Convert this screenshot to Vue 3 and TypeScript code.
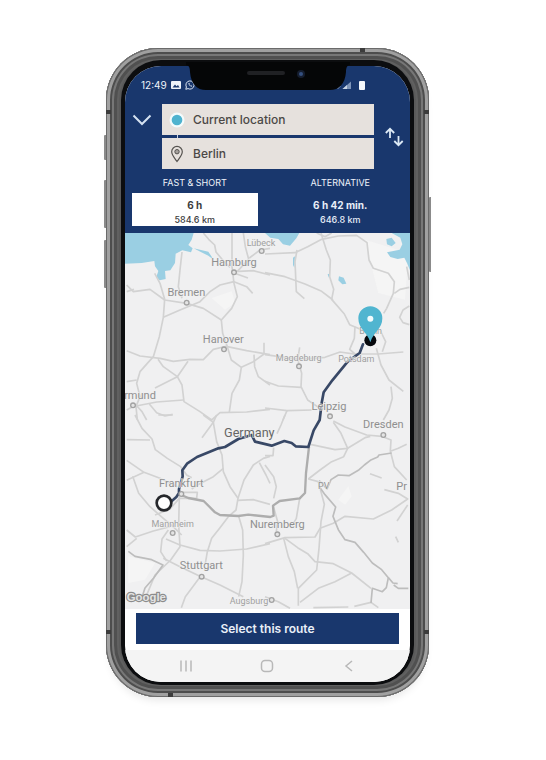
<script setup lang="ts">
import { ref } from 'vue'

interface RouteOption {
  id: string
  title: string
  time: string
  distance: string
}

interface Place {
  name: string
  x: number
  y: number
  size: number
  tone: string
  dot?: [number, number]
}

interface Sheet {
  id: string
  dx: number
  dy: number
  roads: string[]
}

const origin = ref('Current location')
const destination = ref('Berlin')
const selected = ref('fast')

const options: RouteOption[] = [
  { id: 'fast', title: 'FAST & SHORT', time: '6 h', distance: '584.6 km' },
  { id: 'alt', title: 'ALTERNATIVE', time: '6 h 42 min.', distance: '646.8 km' },
]

const swap = () => {
  const previous = origin.value
  origin.value = destination.value
  destination.value = previous
}

// The road network is drawn in four sheets, each with its own origin.
const sheets: Sheet[] = [
  {
    id: 'nw',
    dx: -15,
    dy: -9,
    roads: [
      'M336 9V110L342 160L352 200L335 235L304 270L308 310L322 350L380 362L450 374',
      'M250 9L266 28L284 45L288 66L308 90L330 112',
      'M370 9L376 50L386 88L352 124',
      'M186 66L180 120L175 170L186 205',
      'M104 130L120 160L134 208L130 262L118 320L100 380L60 425L50 460L60 500L48 530L52 570',
      'M20 165L40 185L90 178L134 210L200 220L250 235L304 270',
      'M130 262L180 240L240 215L270 185L300 165L342 155L380 170L398 190',
      'M342 125L400 122L450 135',
      'M344 130L384 144',
      'M450 55L420 60L388 84',
      'M20 362L60 378L120 385L160 394L210 388L250 389L280 358L322 348',
      'M114 388L130 410L172 440L204 394',
      'M105 474L172 440L186 465L192 515L240 545L275 570L300 548L380 546L450 538',
      'M322 350L334 390L364 412L358 450L336 490L328 546',
      'M364 412L400 395L432 372L432 338',
      'M402 374L404 410L415 440L450 465',
      'M20 455L50 450M48 528L110 516L190 510',
      'M88 522L110 548L135 558L158 553',
      'M20 540L48 525L66 545L80 570',
      'M20 185L42 178',
    ],
  },
  {
    id: 'ne',
    dx: 420,
    dy: -9,
    roads: [
      'M0 72L90 68L128 50L170 28L220 18L275 16L306 38L312 90L325 115L370 130L388 155L385 190L365 235L356 250',
      'M168 9L184 60L196 90L194 140L206 178L200 208L238 252L254 284L292 300',
      'M0 128L60 140L120 162L170 184L204 210',
      'M96 60L90 95L94 185L118 206',
      'M388 190L405 178L433 172',
      'M425 110L433 150',
      'M433 228L414 240L404 262L414 278L433 284',
      'M270 290L268 325L254 358L270 372L340 372L415 366',
      'M345 300L362 335L352 365',
      'M334 355L348 405L372 450L415 484',
      'M0 374L60 382L104 388L180 382L225 366L280 374',
      'M104 352L98 388L110 430L108 470L128 510L165 535',
      'M0 454L40 468L108 472',
      'M0 534L66 542L140 540',
      'M66 542L54 570M378 470L382 505L372 540L355 570',
      'M155 9L180 20L200 9',
    ],
  },
  {
    id: 'sw',
    dx: -15,
    dy: 546,
    roads: [
      'M45 0L66 40L96 72L106 104L142 130L182 155L200 180L215 188',
      'M20 74L90 75M115 0L158 0',
      'M250 0L280 22L290 0M280 22L246 68',
      'M280 22L290 80L306 120L310 170L330 215L354 250L348 285L325 305',
      'M310 160L280 185L232 210L215 222',
      'M20 136L72 172L120 190L172 215',
      'M38 184L56 235L90 275L130 310L165 340L185 360',
      'M20 196L72 172',
      'M178 245L176 330L180 395L152 435L105 480L78 545',
      'M145 345L126 372L122 410L140 438',
      'M20 345L46 366L100 348L150 335',
      'M20 395L50 370',
      'M105 300L150 282L178 250',
      'M138 372L180 390L240 406L300 408L380 402L450 386',
      'M325 305L300 338L275 370L262 410L256 445',
      'M355 300L368 345L370 420L366 500L356 545',
      'M130 430L180 455L240 484L300 510L370 545',
      'M240 486L215 520L196 545L184 578',
      'M352 256L400 254L450 268',
      'M354 250L372 195L400 150L430 130L450 124',
      'M418 143L438 180L450 205',
      'M178 232L232 232L230 250L180 250',
    ],
  },
  {
    id: 'se',
    dx: 420,
    dy: 546,
    roads: [
      'M60 0L48 30L36 56',
      'M205 18L240 36L305 60L350 64L378 75L376 108L388 155L425 195',
      'M205 22L228 55L248 100L210 104L136 88',
      'M248 100L236 125L200 140L165 165L130 192',
      'M248 100L300 68L316 64',
      'M130 192L160 200L178 268L168 320L162 400L155 465L100 520V572',
      'M358 224L400 235L428 252L380 285L325 312L240 304L205 325L165 340L150 366L60 368L0 386',
      'M428 270L396 318',
      'M60 370L98 398L128 416L150 440L205 446L260 474L318 520',
      'M56 370L70 425L88 470L98 520',
      'M105 562L160 520L210 500L260 474',
      'M24 270L38 320L34 350',
      'M104 250L94 310L80 335',
      'M0 150L26 185L34 215L26 250',
      'M0 122L24 122L26 98',
      'M378 108L400 100L425 88',
      'M0 545L40 560L75 580',
      'M145 578L250 576M268 574L318 562L340 578',
      'M392 365L400 382M315 176L350 189',
    ],
  },
]

const borders: string[] = [
  'M800 660L762 666L758 672L736 682L718 696L700 712L672 728L640 726L618 740L606 768L584 744L582 760L600 785L632 822L624 850L640 890L660 920L690 928L716 958L742 990L770 1010L790 1034L784 1064L772 1076L742 1066L738 1110',
  'M790 1034L804 1050L818 1052M806 1056L820 1066L850 1066',
  'M10 955L30 970L80 980L114 996L86 1035L60 1065L52 1090',
]

const places: Place[] = [
  { name: 'Lübeck', x: 408, y: 38, size: 27, tone: 'minor', dot: [410, 54] },
  { name: 'Hamburg', x: 327, y: 99, size: 33, tone: 'city', dot: [327, 118] },
  { name: 'Bremen', x: 184, y: 190, size: 33, tone: 'city', dot: [185, 209] },
  { name: 'Hanover', x: 295, y: 329, size: 33, tone: 'city', dot: [297, 349] },
  { name: 'Magdeburg', x: 521, y: 384, size: 27, tone: 'minor', dot: [522, 400] },
  { name: 'Berlin', x: 737, y: 302, size: 27, tone: 'minor' },
  { name: 'Potsdam', x: 694, y: 387, size: 27, tone: 'minor' },
  { name: 'rmund', x: 45, y: 497, size: 33, tone: 'city', dot: [24, 517] },
  { name: 'Leipzig', x: 612, y: 531, size: 33, tone: 'city', dot: [615, 550] },
  { name: 'Dresden', x: 775, y: 585, size: 33, tone: 'city', dot: [775, 606] },
  { name: 'Germany', x: 373, y: 612, size: 38, tone: 'country' },
  { name: 'Frankfurt', x: 169, y: 763, size: 33, tone: 'city', dot: [169, 783] },
  { name: 'Mannheim', x: 143, y: 881, size: 27, tone: 'minor', dot: [143, 900] },
  { name: 'Nuremberg', x: 457, y: 885, size: 33, tone: 'city', dot: [457, 904] },
  { name: 'Stuttgart', x: 229, y: 1009, size: 33, tone: 'city', dot: [230, 1031] },
  { name: 'Augsburg', x: 372, y: 1112, size: 27, tone: 'minor', dot: [440, 1101] },
  { name: 'PV', x: 596, y: 768, size: 27, tone: 'city' },
  { name: 'Pr', x: 830, y: 772, size: 33, tone: 'city' },
]
</script>

<template>
  <main class="stage">
    <div class="phone">
      <span class="key key-mute"></span>
      <span class="key key-up"></span>
      <span class="key key-down"></span>
      <span class="key key-power"></span>
      <span class="band band-left-top"></span>
      <span class="band band-left-bottom"></span>
      <span class="band band-right-top"></span>
      <span class="band band-right-bottom"></span>
      <span class="band band-top"></span>
      <span class="band band-bottom"></span>

      <div class="bezel">
        <svg class="notch" viewBox="0 0 164 28" aria-hidden="true">
          <path d="M0 0H164V3C161 3 160 6 160 10C159 22 153 28 144 28H20C11 28 5 22 4 10C4 6 3 3 0 3Z" fill="#050607" />
          <rect x="61" y="9" width="38" height="4" rx="2" fill="#202124" />
          <circle cx="115" cy="12" r="4" fill="#151d2e" />
          <circle cx="115" cy="12" r="2" fill="#35507f" />
        </svg>

        <div class="screen">
          <header class="planner">
            <div class="status">
              <span class="clock">12:49</span>
              <svg class="status-icon" viewBox="0 0 10 10" aria-hidden="true">
                <rect x="0" y="1" width="10" height="8" rx="1" fill="#eef3fa" />
                <path d="M1.5 7.5L4 4.5L5.5 6.2L7 5L8.6 7.5Z" fill="#1b396f" />
              </svg>
              <svg class="status-icon" viewBox="0 0 10 10" aria-hidden="true">
                <path d="M.8 9.3L1.4 7A4.1 4.1 0 1 1 3 8.6Z" fill="none" stroke="#dce5f2" />
                <path d="M3.4 3.1C3.2 5 5 6.8 6.9 6.7L7 5.7L5.9 5.2L5.3 5.7L4.4 4.8L4.8 4.1L4.4 3Z" fill="#dce5f2" />
              </svg>
              <svg class="status-right" viewBox="0 0 22 10" aria-hidden="true">
                <path d="M9.5 9H18V1.5Z" fill="#7f95b9" />
                <path d="M9.5 9H14V5Z" fill="#c8d4e6" />
                <path d="M2 6L5 9L8 6Z" fill="#7f95b9" />
              </svg>
              <span class="battery"></span>
            </div>

            <form class="search" @submit.prevent>
              <button class="icon-button collapse" type="button" aria-label="Collapse">
                <svg class="chevron" viewBox="0 0 20 12" aria-hidden="true">
                  <path d="M1.5 1.5L10 10L18.5 1.5" fill="none" stroke="#d5e2f1" stroke-width="2" />
                </svg>
              </button>
              <div class="fields">
                <div class="field linked">
                  <svg class="field-icon" viewBox="0 0 16 18" aria-hidden="true">
                    <circle cx="8" cy="9" r="7.5" fill="#f3fbfc" />
                    <circle cx="8" cy="9" r="5.3" fill="#4fb3cf" />
                  </svg>
                  <input v-model="origin" type="text" aria-label="Start" />
                </div>
                <div class="field">
                  <svg class="field-icon" viewBox="0 0 16 18" aria-hidden="true">
                    <path d="M8 16.5C5.5 12.8 2.7 10 2.7 6.7A5.3 5.3 0 0 1 13.3 6.7C13.3 10 10.5 12.8 8 16.5Z" fill="none" stroke="#565350" stroke-width="1.2" />
                    <circle cx="8" cy="6.7" r="2.2" fill="#a6a19d" stroke="#565350" />
                  </svg>
                  <input v-model="destination" type="text" aria-label="Destination" />
                </div>
              </div>
              <button class="icon-button exchange" type="button" aria-label="Swap start and destination" @click="swap">
                <svg class="swap" viewBox="0 0 20 20" aria-hidden="true">
                  <path d="M6 11V2M1.8 6L6 1.8L10.2 6M14.5 9V18M10.3 14L14.5 18.2L18.7 14" fill="none" stroke="#dce9f5" stroke-width="1.8" />
                </svg>
              </button>
            </form>

            <div class="options">
              <div v-for="option in options" :key="option.id" class="option">
                <span :id="option.id" class="option-title">{{ option.title }}</span>
                <button
                  type="button"
                  class="option-card"
                  :class="{ active: selected === option.id }"
                  :aria-pressed="selected === option.id"
                  :aria-describedby="option.id"
                  @click="selected = option.id"
                >
                  <span class="time">{{ option.time }}</span>
                  <span class="distance">{{ option.distance }}</span>
                </button>
              </div>
            </div>
          </header>

          <svg class="map" viewBox="0 0 855 1128" preserveAspectRatio="xMidYMid slice" role="img" aria-label="Route map">
            <rect width="855" height="1128" fill="#f0f0f1" />
            <g fill="#f5f5f5">
              <path d="M640 800L670 760L680 790L660 815Z" />
              <path d="M10 970L90 990L60 1040L10 1050Z" />
              <path d="M260 195L320 175L330 210L300 230Z" />
              <path d="M720 20L850 60L840 200L760 180Z" />
            </g>
            <g fill="#9acfe3">
              <path d="M0 0H206L200 20L190 36L203 46L198 58L172 52L152 62L150 90L136 112L120 114L122 138L104 142L94 132L100 114L90 100L88 84L50 90L0 92Z" />
              <path d="M206 46L250 56L266 80L250 68L226 56Z" />
              <path d="M420 0H523L514 16L495 38L474 34L460 18L436 14Z" />
              <path d="M784 18L800 14L812 30L800 40L786 34ZM800 0H855V112L846 90L838 74L818 78L796 72L786 58L824 50L832 34L826 14Z" />
              <path d="M642 130L656 134L664 152L652 154L640 142Z" />
              <path d="M504 74L510 70L508 104L504 96ZM608 124L613 122L611 134Z" />
            </g>

            <g v-for="sheet in sheets" :key="sheet.id" :transform="`translate(${sheet.dx} ${sheet.dy})`">
              <path v-for="road in sheet.roads" :key="road" class="road" :d="road" />
            </g>
            <path v-for="line in borders" :key="line" class="border" :d="line" />

            <path
              class="route alternative"
              d="M169 786L190 795L236 804L270 838L285 846L340 849L370 845L436 852L446 848L444 818L464 804L524 796L540 780L543 720L552 642"
            />
            <path
              class="route main"
              d="M118 812L138 806L154 792L162 780L162 768L173 730L172 712L186 692L216 672L280 646L300 642L340 618L380 606L390 626L440 638L478 624L500 630L512 640L550 642L566 592L584 561L590 510L596 478L622 442L668 386L704 360L714 334"
            />

            <g v-for="place in places" :key="place.name">
              <circle v-if="place.dot" class="dot" :cx="place.dot[0]" :cy="place.dot[1]" r="7" />
              <text class="place" :class="place.tone" :x="place.x" :y="place.y" :font-size="place.size">{{ place.name }}</text>
            </g>
            <text class="google" x="64" y="1104" font-size="34">Google</text>

            <circle cx="117" cy="810" r="22" fill="#fff" stroke="#25272b" stroke-width="8" />
            <circle cx="736" cy="322" r="18" fill="#06080c" />
            <path d="M736 328C726 296 700 288 700 256A36 36 0 0 1 772 256C772 288 746 296 736 328Z" fill="#50b5d0" />
            <circle cx="736" cy="257" r="9" fill="#f1fbfd" />
          </svg>

          <div class="action">
            <button class="primary" type="button">Select this route</button>
          </div>

          <nav class="system" aria-label="System">
            <button type="button" aria-label="Recent apps">
              <svg viewBox="0 0 14 14" aria-hidden="true">
                <path d="M2 1.5V12.5M7 1.5V12.5M12 1.5V12.5" fill="none" stroke="#b8b8b8" stroke-width="1.5" />
              </svg>
            </button>
            <button type="button" aria-label="Home">
              <svg viewBox="0 0 14 14" aria-hidden="true">
                <rect x="1.5" y="1.5" width="11" height="11" rx="3.5" fill="none" stroke="#b8b8b8" stroke-width="1.5" />
              </svg>
            </button>
            <button type="button" aria-label="Back">
              <svg viewBox="0 0 14 14" aria-hidden="true">
                <path d="M10 2L4 7L10 12" fill="none" stroke="#b8b8b8" stroke-width="1.5" />
              </svg>
            </button>
          </nav>
        </div>
      </div>
    </div>
  </main>
</template>

<style>
body {
  margin: 0;
  background: #fff;
}
</style>

<style scoped>
.stage {
  box-sizing: border-box;
  min-height: 100vh;
  padding: 48px 117px 60px 106px;
  font-family: Inter, "Liberation Sans", sans-serif;
}

button {
  margin: 0;
  padding: 0;
  border: 0;
  background: none;
  color: inherit;
  font: inherit;
  cursor: pointer;
}

.phone {
  position: relative;
  padding: 12px 15px;
  border-radius: 52px;
  background: #5a5a5a;
  box-shadow:
    inset 0 0 0 1px #6a6a6a,
    inset 0 0 0 4px #a0a0a0,
    inset 0 0 0 6px #4d4d4d,
    inset 0 0 0 8px #777,
    inset 0 0 0 11px #505050,
    inset 0 0 0 13px #606060,
    0 7px 8px -4px #e6e6e6;
}

.bezel {
  position: relative;
  padding: 6px 4px 3px;
  border-radius: 40px;
  background: #0c0d0f;
}

.screen {
  display: flex;
  flex-direction: column;
  overflow: hidden;
  border-radius: 36px;
  background: #fff;
}

.notch {
  position: absolute;
  top: 2px;
  left: 50%;
  width: 164px;
  height: 28px;
  transform: translateX(-50%);
}

.key {
  position: absolute;
  left: -2px;
  width: 2px;
  border-radius: 1px 0 0 1px;
  background: #8a8a8a;
}

.key-mute {
  top: 87px;
  height: 25px;
}

.key-up {
  top: 132px;
  height: 48px;
}

.key-down {
  top: 192px;
  height: 48px;
}

.key-power {
  top: 149px;
  right: -2px;
  left: auto;
  height: 75px;
}

.band {
  position: absolute;
  width: 5px;
  height: 4px;
  background: #3c3c3c;
}

.band-left-top {
  top: 62px;
  left: 0;
}

.band-left-bottom {
  bottom: 63px;
  left: 0;
}

.band-right-top {
  top: 62px;
  right: 0;
}

.band-right-bottom {
  right: 0;
  bottom: 63px;
}

.band-top {
  top: 0;
  right: 64px;
}

.band-bottom {
  bottom: 0;
  left: 62px;
}

.planner {
  padding-bottom: 7px;
  background: #19376d;
  color: #eef3fa;
}

.status {
  display: flex;
  align-items: center;
  height: 38px;
  padding: 0 45px 0 16px;
  gap: 4px;
}

.clock {
  font-size: 10px;
  line-height: 12px;
}

.status-icon {
  width: 10px;
  height: 10px;
}

.status-right {
  width: 22px;
  height: 10px;
  margin-left: auto;
}

.battery {
  width: 6px;
  height: 9px;
  border-radius: 1px;
  background: #f4f7fb;
}

.search {
  display: grid;
  grid-template-columns: 37px minmax(0, 1fr) 36px;
}

.icon-button {
  display: flex;
  align-items: center;
}

.collapse {
  height: 32px;
  padding-left: 7px;
}

.exchange {
  justify-content: flex-end;
  padding-right: 6px;
}

.chevron {
  width: 20px;
  height: 12px;
}

.swap {
  width: 20px;
  height: 20px;
}

.fields {
  display: grid;
  grid-template-columns: minmax(0, 1fr);
  gap: 3px;
}

.field {
  position: relative;
  display: flex;
  align-items: center;
  height: 31px;
  padding-left: 7px;
  gap: 8px;
  background: #e6e1dd;
}

.field.linked::after {
  position: absolute;
  bottom: -3px;
  left: 15px;
  width: 1px;
  height: 3px;
  background: #c9d3e2;
  content: "";
}

.field-icon {
  flex: none;
  width: 16px;
  height: 18px;
}

.field input {
  flex: 1;
  width: 100%;
  min-width: 0;
  padding: 0;
  border: 0;
  outline: 0;
  background: transparent;
  color: #4b4846;
  font: 500 12px/16px Inter, "Liberation Sans", sans-serif;
}

.options {
  display: grid;
  grid-template-columns: 1fr 1fr;
  padding: 8px 7px 0;
  gap: 20px;
}

.option {
  display: grid;
  gap: 4px;
}

.option-title {
  font-size: 9px;
  line-height: 12px;
  text-align: center;
}

.option-card {
  display: flex;
  flex-direction: column;
  align-items: center;
  height: 33px;
  padding-top: 6px;
  color: #e8eef8;
}

.option-card.active {
  background: #fff;
  color: #3c3c3e;
}

.time {
  font-size: 10px;
  font-weight: 700;
  line-height: 13px;
}

.distance {
  margin-top: 2px;
  font-size: 9px;
  font-weight: 500;
  line-height: 12px;
}

.map {
  display: block;
  width: 100%;
  aspect-ratio: 285 / 376;
}

.road {
  fill: none;
  stroke: #d2d2d2;
  stroke-linejoin: round;
  stroke-width: 5;
}

.border {
  fill: none;
  stroke: #bdbdbd;
  stroke-linejoin: round;
  stroke-width: 5;
}

.route {
  fill: none;
  stroke-linecap: round;
  stroke-linejoin: round;
}

.alternative {
  stroke: #adadad;
  stroke-width: 7;
}

.main {
  stroke: #384866;
  stroke-width: 8;
}

.dot {
  fill: #e4e4e4;
  stroke: #a2a2a2;
  stroke-width: 4;
}

.place {
  font-family: Roboto, "Liberation Sans", sans-serif;
  paint-order: stroke;
  stroke: #f1f1f1;
  stroke-width: 3;
  text-anchor: middle;
}

.city {
  fill: #8f8f8f;
}

.minor {
  fill: #a0a0a0;
}

.country {
  fill: #666;
}

.google {
  fill: #e4e4e4;
  font-family: "Liberation Sans", sans-serif;
  font-weight: 700;
  paint-order: stroke;
  stroke: #8c8c8c;
  stroke-width: 7;
  text-anchor: middle;
}

.action {
  display: flex;
  padding: 4px 11px 6px;
}

.primary {
  flex: 1;
  height: 31px;
  background: #19376d;
  color: #e9eff8;
  font-size: 12px;
  font-weight: 600;
}

.system {
  display: grid;
  grid-template-columns: repeat(3, 1fr);
  height: 32px;
  padding: 0 20px;
  background: #f4f4f4;
}

.system button {
  display: flex;
  align-items: center;
  justify-content: center;
}

.system svg {
  width: 14px;
  height: 14px;
}
</style>
